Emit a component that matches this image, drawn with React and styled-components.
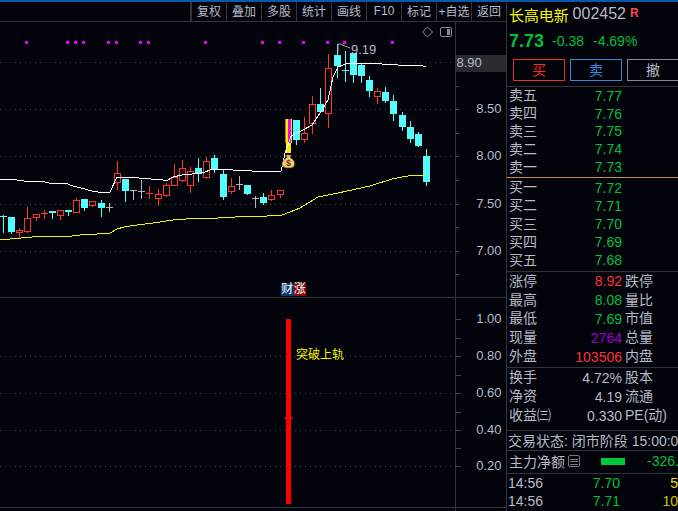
import React from 'react';
import styled, { createGlobalStyle } from 'styled-components';

const Global = createGlobalStyle`
  html, body { margin: 0; padding: 0; background: #03030c; overflow: hidden; }
  * { box-sizing: border-box; }
`;
const FONT = `"Liberation Sans", "Noto Sans CJK SC", sans-serif`;
const BG = '#03030c';
const LINE = '#333438';
const TEXT = '#b4bcc4';
const GREEN = '#00c03c';
const RED = '#ff3232';
const CYAN = '#54fcfc';

const Page = styled.div`
  width: 678px; height: 511px; background: ${BG}; display: flex; flex-direction: column;
  font-family: ${FONT}; color: ${TEXT}; overflow: hidden;
`;
const TopStripe = styled.div`height: 2px; background: #0a56ab; flex: none;`;
const Body = styled.div`flex: 1; display: flex; min-height: 0;`;
const ChartColumn = styled.div`width: 507px; flex: none; display: flex; flex-direction: column; border-right: 1px solid ${LINE};`;
const Toolbar = styled.div`
  height: 20px; flex: none; display: flex; justify-content: flex-end; border-bottom: 1px solid ${LINE};
`;
const ToolButton = styled.div`
  width: ${p => p.$w || 35}px; display: flex; align-items: center; justify-content: center;
  font-size: 12px; border-left: 1px solid ${LINE}; white-space: nowrap; padding-bottom: 2px;
  ${p => p.$first && 'border-left-width: 2px;'}
`;
const PaneStack = styled.div`position: relative; flex: 1;`;
const ChartSvg = styled.svg`display: block;`;
const Badge = styled.div`
  position: absolute; left: 281px; top: 261px; display: flex; font-size: 12px; line-height: 13px; color: #fff;
`;
const BadgeCell = styled.span`background: ${p => p.$bg}; width: 12.5px; text-align: center;`;

const Side = styled.div`width: 171px; flex: none; display: flex; flex-direction: column; overflow: hidden; white-space: nowrap;`;
const Title = styled.div`height: 26px; display: flex; align-items: center; padding: 0 0 2px 2px;`;
const StockName = styled.span`color: #f4f400; font-size: 15px; letter-spacing: -0.1px;`;
const StockCode = styled.span`font-size: 16px; margin-left: 4px;`;
const RBadge = styled.span`color: #ff4848; font-size: 12px; font-weight: 700; margin: 0 0 2px 4px;`;
const PriceRow = styled.div`height: 26px; display: flex; align-items: center; color: ${GREEN}; padding-left: 2px; font-size: 14px;`;
const BigPrice = styled.span`font-size: 18px; font-weight: 700; margin-right: 8px;`;
const Change = styled.span`margin-right: 9px;`;
const Actions = styled.div`display: flex; gap: 5px; padding: 5px 0 0 6px; height: 33px; border-bottom: 1px solid ${LINE};`;
const Action = styled.div`
  width: 52px; height: 22px; flex: none; border: 1px solid ${p => p.$c}; color: ${p => p.$t || p.$c};
  display: flex; align-items: center; justify-content: center; font-size: 14px; padding-bottom: 2px;
`;
const Book = styled.div`
  display: flex; flex-direction: column; height: ${p => p.$h}px; flex: none;
  justify-content: ${p => p.$j || 'flex-start'}; padding-bottom: ${p => p.$pb || 0}px;
  border-bottom: 1px solid ${p => p.$line || LINE};
`;
const BookRow = styled.div`
  height: 18.2px; display: grid; grid-template-columns: 42px 71px; padding-left: 2px; align-items: center; font-size: 14px;
`;
const Cjk = styled.span`padding-bottom: 1px; line-height: 16px;`;
const Px = styled.span`color: ${p => p.$c || GREEN}; text-align: right; font-size: 14px;`;
const StatRow = styled.div`
  height: ${p => p.$h || 18.8}px; display: grid; grid-template-columns: 42px 71px 58px; padding-left: 2px; align-items: center; font-size: 14px;
`;
const StatValue = styled.span`text-align: right; color: ${p => p.$c || 'inherit'}; font-size: 14px;`;
const StatName = styled(Cjk)`padding-left: 3px;`;
const Status = styled.div`height: 20px; flex: none; border-bottom: 1px solid ${LINE}; display: flex; align-items: center; padding: 0 0 2px 1px; font-size: 14px;`;
const Flow = styled.div`height: 23px; flex: none; border-bottom: 1px solid ${LINE}; display: flex; align-items: center; padding: 0 0 2px 2px; font-size: 14px;`;
const FlowIcon = styled.span`width: 12px; height: 12px; margin-left: 3px; border: 1px solid #777; border-radius: 2px; flex: none; background: repeating-linear-gradient(#777 0 1px, transparent 1px 2.5px); background-clip: content-box; padding: 1px;`;
const FlowBar = styled.span`width: 24px; height: 7px; background: #00c83c; margin-left: 21px; flex: none;`;
const FlowValue = styled.span`color: ${GREEN}; margin-left: 22px;`;
const Ticks = styled.div`display: flex; flex-direction: column;`;
const Tick = styled.div`height: 18.2px; display: grid; grid-template-columns: 80px 32px 58px; align-items: center; padding-left: 1px; font-size: 14px;`;
const TickVol = styled.span`text-align: right; color: ${p => p.$c};`;

const candles = [
  [3, 'c', 215, 233, 216, 217],[11, 'c', 217, 234, 217, 232],[19, 'r', 228, 239, 230, 232],[27, 'r', 207, 233, 218, 231],
  [36, 'r', 214, 221, 214, 217],[44, 'r', 210, 219, 213, 214],[52, 'c', 211, 219, 211, 213],[60, 'r', 210, 220, 210, 215],
  [68, 'c', 210, 216, 210, 212],[76, 'r', 198, 213, 200, 212],[84, 'c', 199, 211, 199, 208],[92, 'r', 201, 207, 201, 205],
  [101, 'c', 200, 217, 203, 208],[109, 'g', 203, 212, 207, 208],[117, 'r', 161, 190, 173, 182],[125, 'c', 179, 202, 179, 191],
  [133, 'g', 190, 200, 190, 191],[141, 'g', 180, 199, 191, 192],[149, 'r', 186, 199, 193, 194],[158, 'r', 189, 206, 194, 198],
  [166, 'r', 183, 197, 185, 195],[174, 'r', 164, 185, 177, 185],[182, 'r', 160, 182, 168, 180],[190, 'r', 167, 193, 171, 185],
  [198, 'c', 158, 182, 168, 173],[206, 'r', 157, 179, 161, 177],[214, 'c', 155, 173, 158, 169],[223, 'c', 170, 200, 174, 197],
  [231, 'r', 178, 194, 186, 191],[239, 'g', 176, 190, 184, 185],[247, 'c', 185, 195, 185, 194],[255, 'g', 196, 208, 198, 199],
  [263, 'c', 193, 205, 197, 203],[271, 'r', 190, 201, 195, 199],[280, 'r', 190, 198, 190, 194],
  [296, 'c', 120, 145, 120, 140],[304, 'r', 117, 143, 133, 139],[312, 'r', 96, 134, 104, 123],[320, 'c', 88, 113, 104, 112],
  [328, 'r', 54, 128, 68, 113],[337, 'c', 44, 78, 55, 66],[345, 'g2', 51, 82, 70, 71],[353, 'c', 53, 83, 53, 75],
  [361, 'c', 63, 83, 65, 76],[369, 'c', 76, 97, 80, 91],[377, 'r', 88, 104, 91, 96],[385, 'c', 87, 103, 92, 101],
  [393, 'c', 95, 121, 101, 114],[402, 'c', 112, 131, 115, 127],[410, 'c', 121, 143, 127, 139],[418, 'c', 132, 147, 134, 146],
  [426, 'c', 149, 186, 156, 182],
];
const COLORS = { c: CYAN, r: RED, g: '#b4b4b4', g2: CYAN };

const whiteLine = [[0,179],[16,179],[17,180],[24,181],[41,181],[49,183],[65,183],[73,186],[81,188],[92,191],[98,192],[110,192],[117,177],[137,177],[139,178],[163,180],[168,180],[173,177],[182,175],[202,173],[213,169],[233,170],[252,171],[281,171],[282,167],[285,153],[291,136],[303,130],[312,125],[320,113],[328,100],[333,77],[338,67],[348,63],[365,63],[382,64],[398,65],[423,66],[426,66]];
const yellowLine = [[0,239],[10,239],[32,237],[32,236],[72,236],[80,235],[97,234],[110,233],[117,229],[124,227],[137,225],[153,223],[173,220],[186,219],[218,218],[235,217],[267,216],[282,215],[290,212],[300,208],[318,197],[338,193],[370,186],[392,179],[413,175],[425,175]];
const dots = [26,67,75,83,108,116,140,148,205,262,279,303,327,344,392];
const pts = a => a.map(p => p.join(',')).join(' ');

const Candle = ({ c: [x, t, wt, wb, bt, bb] }) => {
  const col = COLORS[t];
  const doji = bb - bt <= 1;
  return (
    <g stroke={col} fill="none">
      {t === 'r' || t === 'g' ? (
        <>
          <line x1={x + .5} x2={x + .5} y1={wt} y2={doji ? wb : bt} />
          {!doji && <line x1={x + .5} x2={x + .5} y1={bb} y2={wb} />}
        </>
      ) : <line x1={x + .5} x2={x + .5} y1={wt} y2={wb} />}
      {doji
        ? <line x1={x - 3} x2={x + 4} y1={bt + .5} y2={bt + .5} />
        : t === 'r'
          ? <rect x={x - 3 + .5} y={bt + .5} width={6} height={bb - bt} fill={BG} />
          : <rect x={x - 3} y={bt} width={7} height={bb - bt} fill={col} stroke="none" />}
    </g>
  );
};

const Axis = ({ labels }) => labels.map(([y, l]) => (
  <text key={l} x={501.5} y={y} textAnchor="end" fontSize="13" fill={TEXT} fontFamily={FONT}>{l}</text>
));

const Y0 = 22; // the chart svg starts at y=22 of the page
const MainChart = () => (
  <ChartSvg width="506" height="489" viewBox={`0 ${Y0} 506 489`}>
    <g stroke="#444" strokeDasharray="1 4" shapeRendering="crispEdges">
      {[62, 109, 156, 204, 251].map(y => <line key={y} x1="0" x2="455" y1={y + .5} y2={y + .5} />)}
      {[356, 393, 430, 466].map(y => <line key={y} x1="0" x2="455" y1={y + .5} y2={y + .5} />)}
    </g>
    <g shapeRendering="crispEdges">
      <line x1="455.5" x2="455.5" y1="22" y2="511" stroke={LINE} />
      <line x1="0" x2="506" y1="297.5" y2="297.5" stroke={LINE} />
      <line x1="0" x2="506" y1="507.5" y2="507.5" stroke={LINE} />
      {[62,86,109,133,156,180,204,227,251,274].map(y => <line key={y} x1="456" x2="459" y1={y + .5} y2={y + .5} stroke="#444" />)}
      {[319,338,356,375,393,412,430,448,466].map(y => <line key={y} x1="456" x2="461" y1={y + .5} y2={y + .5} stroke="#444" />)}
      {dots.map(x => <rect key={x} x={x - 1} y="41" width="3" height="3" fill="#f000f0" />)}
      <rect x="456" y="55" width="50" height="17" fill="#2a2b2f" />
      <rect x="286" y="319" width="5" height="185" fill="#fc0000" />
      <polygon points="288.5,413 284,419 293.5,419" fill="#fc0000" />
      <rect x="285" y="119" width="7" height="24" fill="#f4f400" />
      <rect x="285" y="119" width="1" height="24" fill="#e06030" />
      <rect x="288" y="119" width="3" height="24" fill="#f000f0" />
      <rect x="286" y="143" width="5" height="10" fill="#f4f400" />
      {candles.map(c => <Candle key={c[0]} c={c} />)}
    </g>
    <polyline points={pts(whiteLine)} fill="none" stroke="#fff" strokeWidth="1" shapeRendering="crispEdges" />
    <polyline points={pts(yellowLine)} fill="none" stroke="#f4f400" strokeWidth="1" shapeRendering="crispEdges" />
    {/* money bag marker */}
    <path d="M285.5 155 L291.5 155 L290 157.5 C293.5 159 295 162 294.5 164.5 C294 167.5 291.5 168 288.5 168 C285.5 168 283 167.5 282.5 164.5 C282 162 283.5 159 287 157.5 Z" fill="#f0cc74" stroke="#5a3c18" strokeWidth="0.6" />
    <text x="288.5" y="165.5" textAnchor="middle" fontSize="9" fontWeight="700" fill="#6a3818" fontFamily={FONT}>$</text>
    <polyline points="338,52 338,44 340,44 350,48" fill="none" stroke="#a8a8a8" />
    <text x="351" y="54" fontSize="13" fill={TEXT} fontFamily={FONT}>9.19</text>
    <polygon points="427.5,27 432.5,32 427.5,37 422.5,32" fill="none" stroke="#8a8a8a" />
    <rect x="440.5" y="27.5" width="11" height="9" rx="1.5" fill="none" stroke="#8a8a8a" />
    <rect x="447" y="29" width="3" height="6" fill="#8a8a8a" />
    <text x="456.5" y="67" fontSize="13" fill={TEXT} fontFamily={FONT}>8.90</text>
    <Axis labels={[[113,'8.50'],[160,'8.00'],[208,'7.50'],[255,'7.00'],[323,'1.00'],[360,'0.80'],[397,'0.60'],[434,'0.40'],[470,'0.20']]} />
    <text x="296" y="359" fontSize="12" fill="#f4f400" fontFamily={FONT}>突破上轨</text>
  </ChartSvg>
);

const asks = [['卖五','7.77'],['卖四','7.76'],['卖三','7.75'],['卖二','7.74'],['卖一','7.73']];
const bids = [['买一','7.72'],['买二','7.71'],['买三','7.70'],['买四','7.69'],['买五','7.68']];
const stats = [
  ['涨停','8.92',RED,'跌停'],['最高','8.08',GREEN,'量比'],['最低','7.69',GREEN,'市值'],
  ['现量','2764','#a000d0','总量'],['外盘','103506',RED,'内盘'],
];
const stats2 = [['换手','4.72%','股本'],['净资','4.19','流通'],['收益㈢','0.330','PE(动)']];

export default function App() {
  return (
    <Page>
      <Global />
      <TopStripe />
      <Body>
        <ChartColumn>
          <Toolbar>
            <ToolButton $first $w={36}>复权</ToolButton>
            <ToolButton>叠加</ToolButton>
            <ToolButton>多股</ToolButton>
            <ToolButton>统计</ToolButton>
            <ToolButton>画线</ToolButton>
            <ToolButton>F10</ToolButton>
            <ToolButton>标记</ToolButton>
            <ToolButton>+自选</ToolButton>
            <ToolButton>返回</ToolButton>
          </Toolbar>
          <PaneStack>
            <MainChart />
            <Badge><BadgeCell $bg="#0a3a70">财</BadgeCell><BadgeCell $bg="#8a0808">涨</BadgeCell></Badge>
          </PaneStack>
        </ChartColumn>
        <Side>
          <Title>
            <StockName>长高电新</StockName>
            <StockCode>002452</StockCode>
            <RBadge>R</RBadge>
          </Title>
          <PriceRow>
            <BigPrice>7.73</BigPrice>
            <Change>-0.38</Change>
            <span>-4.69%</span>
          </PriceRow>
          <Actions>
            <Action $c="#e83030" $t="#ff2828">买</Action>
            <Action $c="#3a88d8" $t="#3a88d8">卖</Action>
            <Action $c="#888" $t={TEXT}>撤</Action>
          </Actions>
          <Book $h={91} $line="#c09040" $j="center" $pb={1}>
            {asks.map(([a, b]) => <BookRow key={a}><Cjk>{a}</Cjk><Px>{b}</Px></BookRow>)}
          </Book>
          <Book $h={94} $j="center" $pb={1}>
            {bids.map(([a, b]) => <BookRow key={a}><Cjk>{a}</Cjk><Px>{b}</Px></BookRow>)}
          </Book>
          <Book $h={96} $j="center" $pb={1}>
            {stats.map(([a, b, c, d]) => <StatRow key={a}><Cjk>{a}</Cjk><StatValue $c={c}>{b}</StatValue><StatName>{d}</StatName></StatRow>)}
          </Book>
          <Book $h={63}>
            {stats2.map(([a, b, d]) => <StatRow key={a} $h={19}><Cjk>{a}</Cjk><StatValue>{b}</StatValue><StatName>{d}</StatName></StatRow>)}
          </Book>
          <Status>交易状态: 闭市阶段 15:00:00</Status>
          <Flow>主力净额<FlowIcon /><FlowBar /><FlowValue>-326.</FlowValue></Flow>
          <Ticks>
            <Tick><span>14:56</span><Px>7.70</Px><TickVol $c="#e0e000">5</TickVol></Tick>
            <Tick><span>14:56</span><Px>7.71</Px><TickVol $c="#c8c800">10</TickVol></Tick>
          </Ticks>
        </Side>
      </Body>
    </Page>
  );
}
